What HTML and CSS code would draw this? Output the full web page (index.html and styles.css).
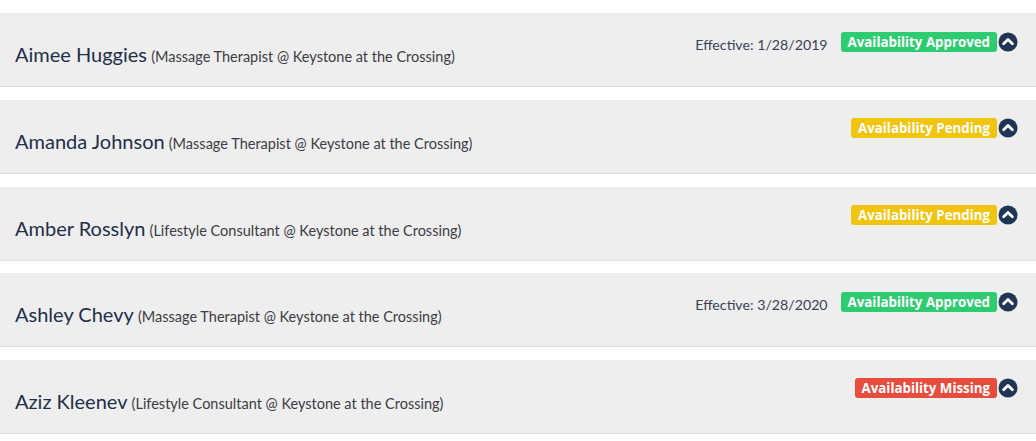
FILE: index.html
```html
<!DOCTYPE html>
<html lang="en">
<head>
  <meta charset="UTF-8" />
  <title>Staff Availability</title>
  <link rel="stylesheet" href="styles.css">
</head>
<body>
  <div class="list">
    <div class="row">
      <div class="who"><span class="name">Aimee Huggies</span> <span class="role">(Massage Therapist @ Keystone at the Crossing)</span></div>
      <div class="status">
        <span class="effective">Effective: 1/28/2019</span>
        <span class="badge approved">Availability Approved</span>
        <span class="toggle"><svg viewBox="0 0 20 20" width="20" height="20"><circle cx="10" cy="10" r="9.5" fill="#1f3553"/><path d="M5.6 11.8 L10 7.4 L14.4 11.8" fill="none" stroke="#fff" stroke-width="2.8" stroke-linecap="round" stroke-linejoin="round"/></svg></span>
      </div>
    </div>
    <div class="row">
      <div class="who"><span class="name">Amanda Johnson</span> <span class="role">(Massage Therapist @ Keystone at the Crossing)</span></div>
      <div class="status">
        <span class="badge pending">Availability Pending</span>
        <span class="toggle"><svg viewBox="0 0 20 20" width="20" height="20"><circle cx="10" cy="10" r="9.5" fill="#1f3553"/><path d="M5.6 11.8 L10 7.4 L14.4 11.8" fill="none" stroke="#fff" stroke-width="2.8" stroke-linecap="round" stroke-linejoin="round"/></svg></span>
      </div>
    </div>
    <div class="row">
      <div class="who"><span class="name">Amber Rosslyn</span> <span class="role">(Lifestyle Consultant @ Keystone at the Crossing)</span></div>
      <div class="status">
        <span class="badge pending">Availability Pending</span>
        <span class="toggle"><svg viewBox="0 0 20 20" width="20" height="20"><circle cx="10" cy="10" r="9.5" fill="#1f3553"/><path d="M5.6 11.8 L10 7.4 L14.4 11.8" fill="none" stroke="#fff" stroke-width="2.8" stroke-linecap="round" stroke-linejoin="round"/></svg></span>
      </div>
    </div>
    <div class="row">
      <div class="who"><span class="name">Ashley Chevy</span> <span class="role">(Massage Therapist @ Keystone at the Crossing)</span></div>
      <div class="status">
        <span class="effective">Effective: 3/28/2020</span>
        <span class="badge approved">Availability Approved</span>
        <span class="toggle"><svg viewBox="0 0 20 20" width="20" height="20"><circle cx="10" cy="10" r="9.5" fill="#1f3553"/><path d="M5.6 11.8 L10 7.4 L14.4 11.8" fill="none" stroke="#fff" stroke-width="2.8" stroke-linecap="round" stroke-linejoin="round"/></svg></span>
      </div>
    </div>
    <div class="row">
      <div class="who"><span class="name">Aziz Kleenev</span> <span class="role">(Lifestyle Consultant @ Keystone at the Crossing)</span></div>
      <div class="status">
        <span class="badge missing">Availability Missing</span>
        <span class="toggle"><svg viewBox="0 0 20 20" width="20" height="20"><circle cx="10" cy="10" r="9.5" fill="#1f3553"/><path d="M5.6 11.8 L10 7.4 L14.4 11.8" fill="none" stroke="#fff" stroke-width="2.8" stroke-linecap="round" stroke-linejoin="round"/></svg></span>
      </div>
    </div>
  </div>
</body>
</html>
```

FILE: styles.css
```css
* {
  box-sizing: border-box;
  margin: 0;
  padding: 0;
}
body {
  background-color: #fff;
  font-family: 'Lato', sans-serif;
}
.list {
  display: flex;
  flex-direction: column;
  gap: 12.75px;
  padding-top: 13px;
}
.row {
  height: 74px;
  background-color: #eeeeee;
  border-bottom: 1px solid #dcdcdc;
  display: flex;
  justify-content: space-between;
  align-items: flex-start;
  padding: 0 18px 0 15px;
}
.who {
  padding-top: 29px;
  line-height: 24px;
  white-space: nowrap;
}
.name {
  font-size: 20px;
  color: #1f2e4a;
}
.role {
  font-size: 14.5px;
  color: #3c3c44;
}
.status {
  display: flex;
  align-items: center;
  padding-top: 18px;
}
.effective {
  font-size: 14.2px;
  color: #3a4156;
  margin-right: 13px;
  padding-top: 5px;
}
.badge {
  font-family: 'Open Sans', sans-serif;
  font-weight: 700;
  font-size: 13.3px;
  line-height: 20px;
  color: #fff;
  padding: 0 7px;
  border-radius: 3px;
}
.approved {
  background-color: #2ecc71;
}
.pending {
  background-color: #f1c40f;
}
.missing {
  background-color: #e74c3c;
}
.toggle {
  display: flex;
  width: 20px;
  height: 20px;
  margin-left: 1px;
  cursor: pointer;
}
```
